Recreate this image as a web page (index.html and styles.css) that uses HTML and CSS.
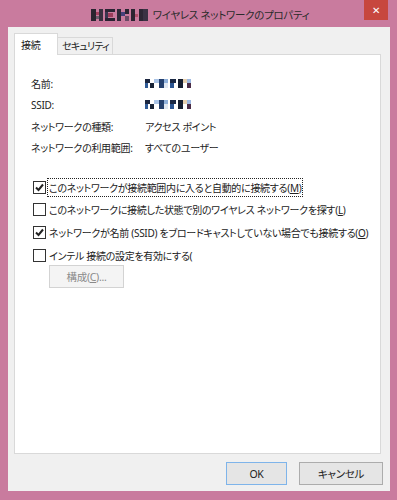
FILE: index.html
```html
<!DOCTYPE html>
<html>
<head>
  <title>ワイヤレス ネットワークのプロパティ</title>
  <link rel="stylesheet" href="styles.css">
</head>
<body>
  <div class="window">
    <div class="titlebar">
      <div class="title">
        <svg class="logo" width="57" height="12" viewBox="0 0 57 12">
          <rect x="0" y="0" width="5" height="12" fill="#2a2430"/>
          <rect x="5" y="3" width="3" height="3" fill="#a3405e"/>
          <rect x="5" y="7" width="3" height="3" fill="#6b5c6c"/>
          <rect x="8" y="0" width="4" height="12" fill="#3a3040"/>
          <rect x="14" y="0" width="10" height="3" fill="#2c2434"/>
          <rect x="14" y="3" width="3" height="6" fill="#3b3550"/>
          <rect x="17" y="4" width="5" height="4" fill="#9c3d5b"/>
          <rect x="14" y="9" width="10" height="3" fill="#2a2232"/>
          <rect x="26" y="0" width="4" height="12" fill="#2e2838"/>
          <rect x="30" y="3" width="4" height="4" fill="#45407a"/>
          <rect x="34" y="0" width="4" height="5" fill="#2a2432"/>
          <rect x="34" y="7" width="4" height="5" fill="#6a4a66"/>
          <rect x="40" y="0" width="4" height="12" fill="#2b2431"/>
          <rect x="44" y="5" width="3" height="3" fill="#b0506a"/>
          <rect x="48" y="0" width="4" height="12" fill="#2c2634"/>
          <rect x="52" y="0" width="5" height="12" fill="#3a3244"/>
        </svg>
        <span>ワイヤレス ネットワークのプロパティ</span>
      </div>
      <div class="close">&#x2715;</div>
    </div>

    <div class="client">
      <div class="tabs">
        <div class="tab active">接続</div>
        <div class="tab">セキュリティ</div>
      </div>

      <div class="panel">
        <div class="info">
          <div class="label">名前:</div>
          <div class="value">
            <svg width="46" height="9" viewBox="0 0 46 9">
              <rect x="0" y="0" width="5" height="4" fill="#1b2640"/>
              <rect x="0" y="4" width="3" height="5" fill="#2f5a96"/>
              <rect x="5" y="4" width="4" height="5" fill="#172236"/>
              <rect x="9" y="0" width="5" height="4" fill="#a9c3e6"/>
              <rect x="14" y="0" width="5" height="9" fill="#24406e"/>
              <rect x="19" y="0" width="4" height="4" fill="#8fb0da"/>
              <rect x="19" y="4" width="4" height="5" fill="#dfe7f2"/>
              <rect x="25" y="0" width="6" height="4" fill="#1a2844"/>
              <rect x="25" y="4" width="4" height="5" fill="#2b5592"/>
              <rect x="33" y="0" width="5" height="9" fill="#151e30"/>
              <rect x="38" y="0" width="4" height="4" fill="#e6cfae"/>
              <rect x="42" y="0" width="4" height="4" fill="#9db8e0"/>
              <rect x="42" y="4" width="4" height="5" fill="#4a2c46"/>
            </svg>
          </div>
          <div class="label">SSID:</div>
          <div class="value">
            <svg width="46" height="9" viewBox="0 0 46 9">
              <rect x="0" y="0" width="5" height="4" fill="#1b2640"/>
              <rect x="0" y="4" width="3" height="5" fill="#2f5a96"/>
              <rect x="5" y="4" width="4" height="5" fill="#172236"/>
              <rect x="9" y="0" width="5" height="4" fill="#a9c3e6"/>
              <rect x="14" y="0" width="5" height="9" fill="#24406e"/>
              <rect x="19" y="0" width="4" height="4" fill="#8fb0da"/>
              <rect x="19" y="4" width="4" height="5" fill="#dfe7f2"/>
              <rect x="25" y="0" width="6" height="4" fill="#1a2844"/>
              <rect x="25" y="4" width="4" height="5" fill="#2b5592"/>
              <rect x="33" y="0" width="5" height="9" fill="#151e30"/>
              <rect x="38" y="0" width="4" height="4" fill="#e6cfae"/>
              <rect x="42" y="0" width="4" height="4" fill="#9db8e0"/>
              <rect x="42" y="4" width="4" height="5" fill="#4a2c46"/>
            </svg>
          </div>
          <div class="label">ネットワークの種類:</div>
          <div class="value">アクセス ポイント</div>
          <div class="label">ネットワークの利用範囲:</div>
          <div class="value">すべてのユーザー</div>
        </div>

        <div class="options">
          <div class="option">
            <span class="box"><svg width="11" height="11" viewBox="0 0 11 11"><path d="M2 5.5 L4.5 8 L9 2.5" fill="none" stroke="#222" stroke-width="2"/></svg></span>
            <span class="text focused">このネットワークが接続範囲内に入ると自動的に接続する(<u>M</u>)</span>
          </div>
          <div class="option">
            <span class="box"></span>
            <span class="text">このネットワークに接続した状態で別のワイヤレス ネットワークを探す(<u>L</u>)</span>
          </div>
          <div class="option">
            <span class="box"><svg width="11" height="11" viewBox="0 0 11 11"><path d="M2 5.5 L4.5 8 L9 2.5" fill="none" stroke="#222" stroke-width="2"/></svg></span>
            <span class="text">ネットワークが名前 (SSID) をブロードキャストしていない場合でも接続する(<u>O</u>)</span>
          </div>
          <div class="option">
            <span class="box"></span>
            <span class="text">インテル 接続の設定を有効にする(</span>
          </div>
          <div class="config">
            <button class="btn disabled" disabled>構成(<u>C</u>)...</button>
          </div>
        </div>
      </div>

      <div class="footer">
        <button class="btn default">OK</button>
        <button class="btn cancel">キャンセル</button>
      </div>
    </div>
  </div>
</body>
</html>
```

FILE: styles.css
```css
body {
  margin: 0;
  padding: 0;
  font-family: "Noto Sans", "Noto Sans CJK JP", sans-serif;
  font-size: 10px;
  letter-spacing: -0.3px;
  font-feature-settings: "palt";
  color: #222;
}

.window {
  width: 397px;
  height: 500px;
  background-color: #c97b9e;
  display: flex;
  flex-direction: column;
  box-sizing: border-box;
  padding: 0 7px 9px 8px;
}

.titlebar {
  height: 27px;
  display: flex;
  align-items: flex-start;
  justify-content: center;
  position: relative;
}

.title {
  display: flex;
  align-items: center;
  height: 29px;
  margin-left: 2px;
  font-size: 10.5px;
  letter-spacing: -0.3px;
  color: #2b2b2b;
}

.logo {
  margin-right: 5px;
}

.close {
  position: absolute;
  top: 0;
  right: 2px;
  width: 24px;
  height: 20px;
  background-color: #c7473e;
  color: #fff;
  font-size: 10px;
  line-height: 20px;
  text-align: center;
}

.client {
  flex: 1;
  background-color: #f0f0f0;
  display: flex;
  flex-direction: column;
  padding: 6px 9px 0 6px;
}

.tabs {
  display: flex;
  align-items: flex-end;
  height: 21px;
  position: relative;
  z-index: 1;
  white-space: nowrap;
}

.tab {
  border: 1px solid #d9d9d9;
  border-bottom: none;
  background-color: #f0f0f0;
  height: 16px;
  line-height: 16px;
  padding: 0 3px 0 4px;
  letter-spacing: -0.8px;
}

.tab.active {
  background-color: #fff;
  height: 21px;
  line-height: 22px;
  padding: 0 9px 0 6px;
  width: 27px;
  margin-bottom: -1px;
  letter-spacing: -0.3px;
}

.tab + .tab {
  border-left: none;
}

.panel {
  height: 400px;
  background-color: #fff;
  border: 1px solid #d9d9d9;
  padding: 18px 0 0 16px;
  box-sizing: border-box;
}

.info {
  display: grid;
  grid-template-columns: 114px auto;
  grid-auto-rows: 21.3px;
  align-items: center;
  white-space: nowrap;
}

.value svg {
  display: block;
}

.options {
  margin-top: 19px;
  padding-left: 2px;
}

.option {
  display: flex;
  align-items: center;
  height: 20px;
  margin-bottom: 2.7px;
}

.box {
  flex-shrink: 0;
  width: 11px;
  height: 11px;
  border: 1px solid #333;
  background-color: #fff;
  margin-right: 1px;
  display: flex;
}

.text {
  white-space: nowrap;
  padding: 1px;
  border: 1px dotted transparent;
}

.text.focused {
  border-color: #222;
}

.config {
  padding-left: 16px;
  margin-top: -3px;
}

.btn {
  font-family: "Noto Sans", "Noto Sans CJK JP", sans-serif;
  font-size: 10.5px;
  letter-spacing: -0.3px;
  font-feature-settings: "palt";
  height: 23px;
  padding: 0;
  color: #222;
  background-color: #e5e5e5;
  border: 1px solid #acacac;
}

.btn.disabled {
  width: 75px;
  background-color: #f4f4f4;
  border-color: #d3d3d3;
  color: #8a8a8a;
}

.footer {
  display: flex;
  justify-content: flex-end;
  gap: 12px;
  padding-top: 8px;
  margin-right: -2px;
}

.btn.default {
  width: 61px;
  border-color: #7eb4ea;
}

.btn.cancel {
  width: 84px;
}
```
